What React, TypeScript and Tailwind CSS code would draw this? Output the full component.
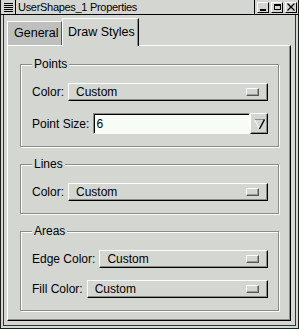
import React from "react";

const Combo = () => (
  <div className="flex-1 h-[18px] flex items-center justify-between border border-t-white border-l-white border-r-black border-b-black shadow-[inset_-1px_-1px_0_#8a8c88] pl-[7px] pr-[8px]">
    <span className="leading-[14px]">Custom</span>
    <span className="w-[13px] h-[8px] border border-t-white border-l-white border-r-[#555] border-b-[#555] shadow-[inset_-1px_-1px_0_#9a9c98]" />
  </div>
);

const Row = ({ label, children }: { label: string; children: React.ReactNode }) => (
  <div className="flex items-center gap-[4px]">
    <span className="whitespace-nowrap leading-[14px]">{label}</span>
    {children}
  </div>
);

const Group = ({
  title,
  className,
  children,
}: {
  title: string;
  className?: string;
  children: React.ReactNode;
}) => (
  <fieldset
    className={`border border-[#8a8c88] shadow-[inset_1px_1px_0_#fff,1px_1px_0_#fff] pl-[11px] pr-[10px] pb-[12px] pt-[12px] flex flex-col gap-[12px] min-w-0 ${className ?? ""}`}
  >
    <legend className="px-[2px] leading-[14px] bg-[#d4d6d2]">{title}</legend>
    {children}
  </fieldset>
);

const TitleButton = ({ children }: { children: React.ReactNode }) => (
  <div className="w-[12px] h-[11px] border border-t-white border-l-white border-r-black border-b-black flex items-center justify-center">
    {children}
  </div>
);

export default function App() {
  return (
    <div className="w-[299px] h-[329px] bg-[#d4d6d2] border-l border-r border-b border-[#1c1c1c] border-b-[#0b2a18] flex flex-col font-['Liberation_Sans',sans-serif] text-[12px] text-black overflow-hidden">
      {/* title bar */}
      <div className="h-[15px] flex items-center border-b border-black shrink-0">
        <div className="w-[15px] h-[14px] flex flex-col justify-center items-center gap-[1px] border-r border-black">
          {[0, 1, 2, 3, 4].map((i) => (
            <div key={i} className="w-[9px] h-[1px] bg-black" />
          ))}
        </div>
        <span className="pl-[2px] text-[11px] tracking-[-0.3px] leading-[13px] flex-1">UserShapes_1 Properties</span>
        <div className="h-[14px] flex items-center gap-[2px] border-l border-black pl-[2px] pr-[1px]">
          <TitleButton>
            <div className="w-[6px] h-[2px] bg-black mt-[5px]" />
          </TitleButton>
          <TitleButton>
            <div className="w-[7px] h-[6px] border border-black border-t-2" />
          </TitleButton>
          <TitleButton>
            <svg width="8" height="8" viewBox="0 0 8 8">
              <path d="M0.5 0.5 L7.5 7.5 M7.5 0.5 L0.5 7.5" stroke="#000" strokeWidth="1.2" />
            </svg>
          </TitleButton>
        </div>
      </div>

      {/* body */}
      <div className="flex-1 flex flex-col mx-[2px] mb-[2px] border-l border-r border-b border-[#333] pl-[3px] pr-[4px] pt-[3px] pb-[4px]">
        {/* tabs */}
        <div className="h-[27px] flex items-end shrink-0">
          <div className="h-[24px] w-[55px] bg-[#bfc0bd] border-t border-l border-white border-r border-r-[#555] flex items-center pl-[6px] text-[12.5px]">
            General
          </div>
          <div className="relative z-10 mb-[-1px] h-[28px] w-[77px] bg-[#d4d6d2] border-t border-l border-white border-r border-r-black shadow-[inset_-1px_0_0_#8a8c88] flex items-center pl-[5px] text-[12.5px]">
            Draw Styles
          </div>
        </div>

        {/* panel */}
        <div className="flex-1 flex flex-col border-t border-l border-white border-r border-b border-r-black border-b-black shadow-[inset_-1px_-1px_0_#8a8c88] pt-[11px] pl-[12px] pr-[11px]">
          <Group title="Points">
            <Row label="Color:">
              <Combo />
            </Row>
            <Row label="Point Size:">
              <div className="flex-1 flex h-[21px]">
                <div className="flex-1 h-[21px] bg-[#f8fcf7] border border-t-[#8a8c88] border-l-[#8a8c88] border-r-white border-b-white shadow-[inset_1px_1px_0_#000] pl-[2px] flex items-center">
                  6
                </div>
                <div className="w-[18px] h-[21px] border border-t-white border-l-white border-r-black border-b-black shadow-[inset_-1px_-1px_0_#8a8c88] flex items-center justify-center">
                  <svg width="11" height="12" viewBox="0 0 11 12">
                    <path d="M0.5 1.5 L10.5 1.5" stroke="#8a8c88" />
                    <path d="M0.5 1.5 L5.5 11" stroke="#fff" />
                    <path d="M10.5 1.5 L5.5 11" stroke="#000" strokeWidth="1.4" />
                  </svg>
                </div>
              </div>
            </Row>
          </Group>

          <Group title="Lines" className="mt-[10px] pb-[11px]">
            <Row label="Color:">
              <Combo />
            </Row>
          </Group>

          <Group title="Areas" className="mt-[10px]">
            <Row label="Edge Color:">
              <Combo />
            </Row>
            <Row label="Fill Color:">
              <Combo />
            </Row>
          </Group>
        </div>
      </div>
    </div>
  );
}
